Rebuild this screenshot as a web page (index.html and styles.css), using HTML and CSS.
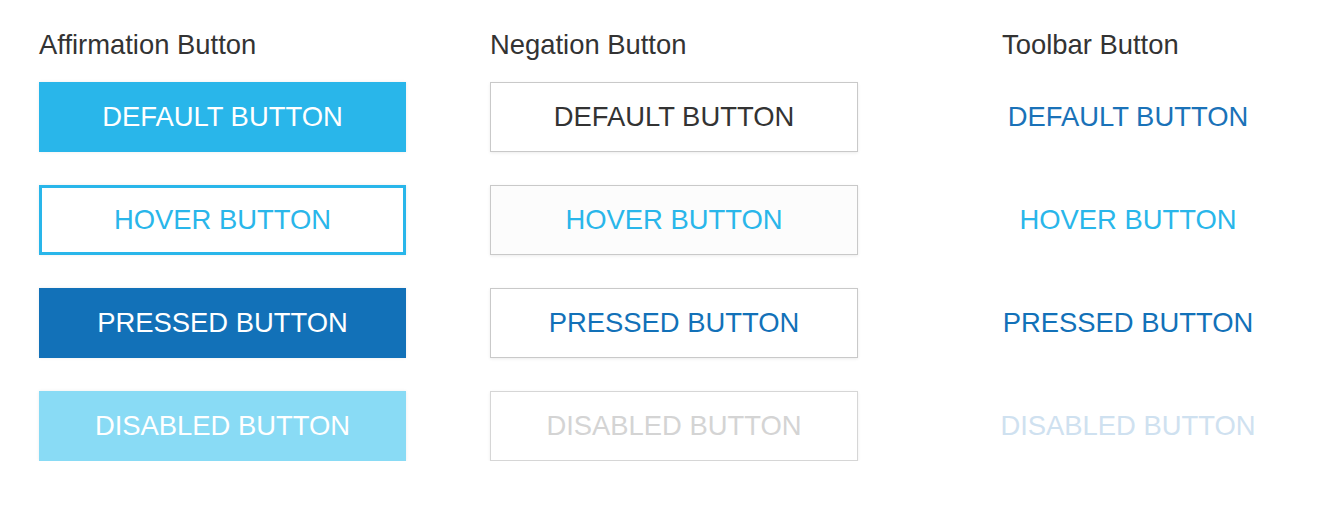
FILE: index.html
```html
<!DOCTYPE html>
<html>
<head>
<meta charset="utf-8">
<link rel="stylesheet" href="styles.css">
</head>
<body>
<div class="page">
  <section class="col col-aff">
    <h2 class="title">Affirmation Button</h2>
    <div class="btn aff default">DEFAULT BUTTON</div>
    <div class="btn aff hover">HOVER BUTTON</div>
    <div class="btn aff pressed">PRESSED BUTTON</div>
    <div class="btn aff disabled">DISABLED BUTTON</div>
  </section>
  <section class="col col-neg">
    <h2 class="title">Negation Button</h2>
    <div class="btn neg default">DEFAULT BUTTON</div>
    <div class="btn neg hover">HOVER BUTTON</div>
    <div class="btn neg pressed">PRESSED BUTTON</div>
    <div class="btn neg disabled">DISABLED BUTTON</div>
  </section>
  <section class="col col-tool">
    <h2 class="title">Toolbar Button</h2>
    <div class="btn tool default">DEFAULT BUTTON</div>
    <div class="btn tool hover">HOVER BUTTON</div>
    <div class="btn tool pressed">PRESSED BUTTON</div>
    <div class="btn tool disabled">DISABLED BUTTON</div>
  </section>
</div>
</body>
</html>
```

FILE: styles.css
```css
html, body {
  margin: 0;
  padding: 0;
  background: #ffffff;
}
body {
  font-family: "Liberation Sans", Arial, sans-serif;
}
.page {
  display: flex;
  align-items: flex-start;
  padding: 29px 0 0 39px;
}
.col {
  display: flex;
  flex-direction: column;
  gap: 33px;
}
.col-aff { width: 367px; }
.col-neg { width: 368px; margin-left: 84px; }
.col-tool { width: 254px; margin-left: 143px; }
.title {
  margin: 0 0 -12px 0;
  font-weight: normal;
  font-size: 27.4px;
  line-height: 32px;
  color: #333333;
}
.col-tool .title { padding-left: 1px; }
.btn {
  box-sizing: border-box;
  height: 70px;
  display: flex;
  align-items: center;
  justify-content: center;
  font-size: 27.4px;
  white-space: nowrap;
}
.aff { box-shadow: 0 0 3px rgba(0, 0, 0, 0.08); }
.aff.default { background: #29b6ea; color: #ffffff; }
.aff.hover { background: #ffffff; border: 3px solid #29b6ea; color: #29b6ea; }
.aff.pressed { background: #1271b8; color: #ffffff; }
.aff.disabled { background: #89dbf5; color: #ffffff; }

.neg {
  border: 1px solid #c9c9c9;
  box-shadow: 0 1px 3px rgba(0, 0, 0, 0.08);
  background: #ffffff;
}
.neg.default { color: #333333; }
.neg.hover { background: #fcfcfc; color: #29b6ea; }
.neg.pressed { color: #1271b8; }
.neg.disabled { color: #d4d4d4; border-color: #d6d6d6; }

.tool.default { color: #1a72b8; }
.tool.hover { color: #29b6ea; }
.tool.pressed { color: #1271b8; }
.tool.disabled { color: #cfe1f0; }
```
